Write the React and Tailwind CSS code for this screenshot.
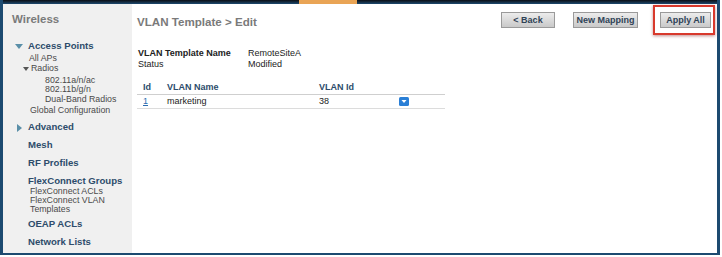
import React from 'react';

const NAV = [
  { label: 'Access Points', mt: 'mt-[12px]', h: 'h-[12px]', pl: 'pl-[25px]', kind: 'head', arrow: 'down' },
  { label: 'All APs', mt: 'mt-[1px]', h: 'h-[10px]', pl: 'pl-[26px]', kind: 'sub' },
  { label: 'Radios', mt: 'mt-0', h: 'h-[10px]', pl: 'pl-[28px]', kind: 'sub', arrow: 'small' },
  { label: '802.11a/n/ac', mt: 'mt-[2px]', h: 'h-[10px]', pl: 'pl-[42px]', kind: 'sub' },
  { label: '802.11b/g/n', mt: 'mt-0', h: 'h-[9px]', pl: 'pl-[42px]', kind: 'sub' },
  { label: 'Dual-Band Radios', mt: 'mt-0', h: 'h-[10px]', pl: 'pl-[42px]', kind: 'sub' },
  { label: 'Global Configuration', mt: 'mt-[1px]', h: 'h-[10px]', pl: 'pl-[27px]', kind: 'sub' },
  { label: 'Advanced', mt: 'mt-[6px]', h: 'h-[12px]', pl: 'pl-[25px]', kind: 'head', arrow: 'right' },
  { label: 'Mesh', mt: 'mt-[6px]', h: 'h-[12px]', pl: 'pl-[25px]', kind: 'head' },
  { label: 'RF Profiles', mt: 'mt-[6px]', h: 'h-[12px]', pl: 'pl-[25px]', kind: 'head' },
  { label: 'FlexConnect Groups', mt: 'mt-[6px]', h: 'h-[12px]', pl: 'pl-[25px]', kind: 'head' },
  { label: 'FlexConnect ACLs', mt: 'mt-0', h: 'h-[9px]', pl: 'pl-[27px]', kind: 'sub' },
  { label: 'FlexConnect VLAN', mt: 'mt-0', h: 'h-[9px]', pl: 'pl-[27px]', kind: 'sub' },
  { label: 'Templates', mt: 'mt-0', h: 'h-[9px]', pl: 'pl-[27px]', kind: 'sub' },
  { label: 'OEAP ACLs', mt: 'mt-[4px]', h: 'h-[12px]', pl: 'pl-[25px]', kind: 'head' },
  { label: 'Network Lists', mt: 'mt-[6px]', h: 'h-[12px]', pl: 'pl-[25px]', kind: 'head' },
];

const Arrow = ({ dir }) => {
  if (dir === 'down')
    return (
      <svg width="8" height="6" viewBox="0 0 8 6" className="absolute left-[-13px] top-[3px]">
        <polygon points="0,0 8,0 4,5" fill="#5a8fa8" />
      </svg>
    );
  if (dir === 'right')
    return (
      <svg width="6" height="8" viewBox="0 0 6 8" className="absolute left-[-11px] top-[2px]">
        <polygon points="0,0 5,4 0,8" fill="#5a8fa8" />
      </svg>
    );
  return (
    <svg width="6" height="5" viewBox="0 0 6 5" className="absolute left-[-8px] top-[3px]">
      <polygon points="0,0 6,0 3,4" fill="#555" />
    </svg>
  );
};

const Sidebar = () => (
  <div className="w-[129px] bg-[#f0f0f0] flex flex-col">
    <div className="mt-[8px] h-[16px] pl-[9px] flex items-center text-[11.5px] font-bold text-[#7a7a7a]">
      Wireless
    </div>
    {NAV.map((item) => (
      <div key={item.label} className={`${item.mt} ${item.h} ${item.pl} flex items-center`}>
        <span
          className={`relative leading-none ${
            item.kind === 'head'
              ? 'text-[9.6px] font-bold text-[#2d4c6b]'
              : 'text-[8.8px] text-[#4a4a4a]'
          }`}
        >
          {item.arrow && <Arrow dir={item.arrow} />}
          {item.label}
        </span>
      </div>
    ))}
  </div>
);

const Btn = ({ children, w }) => (
  <button
    className={`${w} h-[16px] border border-[#9a9a9a] bg-gradient-to-b from-[#ececec] to-[#c9c9c9] text-[9px] font-bold text-[#2f4256] leading-none`}
  >
    {children}
  </button>
);

const Main = () => (
  <div className="flex-1 bg-white flex flex-col pl-[5px] pr-[2px]">
    <div className="mt-[1px] h-[30px] flex items-center">
      <div className="flex-1 pt-[3px] text-[11.6px] font-bold text-[#7a7a7a]">VLAN Template &gt; Edit</div>
      <Btn w="w-[54px]">&lt; Back</Btn>
      <div className="w-[18px]" />
      <Btn w="w-[65px]">New Mapping</Btn>
      <div className="w-[15px]" />
      <div className="h-[30px] w-[62px] border-2 border-[#d8392c] shadow-[0_1px_3px_rgba(120,0,0,0.45)] flex items-center pl-[5px]">
        <Btn w="w-[51px]">Apply All</Btn>
      </div>
    </div>

    <div className="mt-[13px] flex flex-col text-[9px] text-[#222] pl-[1px]">
      <div className="h-[11px] flex items-center">
        <span className="w-[110px] font-bold">VLAN Template Name</span>
        <span>RemoteSiteA</span>
      </div>
      <div className="h-[11px] flex items-center">
        <span className="w-[110px]">Status</span>
        <span>Modified</span>
      </div>
    </div>

    <div className="mt-[12px] w-[308px] text-[9px]">
      <div className="h-[11px] flex items-center pl-[6px] font-bold text-[#2d4c6b] border-b border-[#cfcfcf] box-content pb-[1px]">
        <span className="w-[24px]">Id</span>
        <span className="w-[152px]">VLAN Name</span>
        <span>VLAN Id</span>
      </div>
      <div className="h-[14px] flex items-center pl-[6px] text-[#222] border-b border-[#dcdcdc]">
        <span className="w-[24px] text-[#2b6cb0] underline">1</span>
        <span className="w-[152px]">marketing</span>
        <span className="w-[80px]">38</span>
        <svg width="10" height="9" viewBox="0 0 10 9">
          <rect x="0" y="0" width="10" height="9" rx="1.5" fill="#2a7fd6" />
          <polygon points="2.5,3 7.5,3 5,6" fill="#fff" />
        </svg>
      </div>
    </div>
  </div>
);

export default function App() {
  return (
    <div className="w-[722px] h-[257px] bg-white font-['Liberation_Sans',Arial,sans-serif]">
      <div className="w-[720px] h-[255px] flex flex-col border-l-[3px] border-r-[3px] border-b-[2px] border-[#1c4a70]">
        <div className="h-[4px] flex">
          <div className="w-[296px] bg-gradient-to-b from-[#0a0f16] to-[#1c4a70]" />
          <div className="w-[58px] bg-[#e9a455]" />
          <div className="flex-1 bg-gradient-to-b from-[#0a0f16] to-[#1c4a70]" />
        </div>
        <div className="flex-1 flex">
          <Sidebar />
          <Main />
        </div>
      </div>
    </div>
  );
}
